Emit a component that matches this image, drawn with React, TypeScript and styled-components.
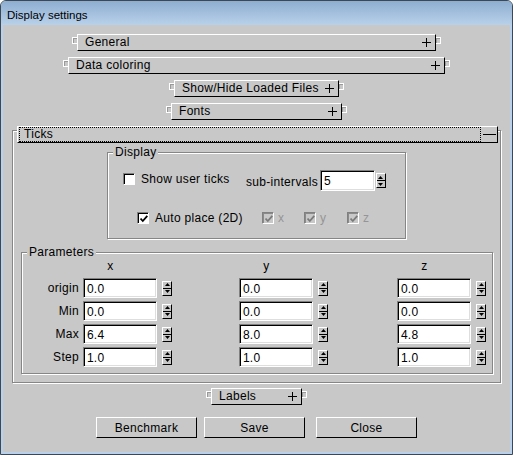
import React, { FC } from 'react';
import styled, { createGlobalStyle } from 'styled-components';

const GlobalStyle = createGlobalStyle`
  html, body {
    margin: 0;
    padding: 0;
    background: #fff;
  }
  body {
    font-family: "Liberation Sans", Arial, sans-serif;
    font-size: 12px;
    color: #000;
  }
`;

const Window = styled.div`
  width: 513px;
  height: 455px;
  box-sizing: border-box;
  border: 1px solid #3e4852;
  border-radius: 6px 6px 0 0;
  background: #b9d1ea;
  display: flex;
  flex-direction: column;
  overflow: hidden;
`;

const TitleBar = styled.div`
  flex: none;
  height: 24px;
  box-sizing: border-box;
  padding: 3px 0 0 6px;
  display: flex;
  align-items: center;
  background: linear-gradient(#8eaed1, #b9d1ea);
  font-size: 11.5px;
`;

const Body = styled.div`
  flex: 1;
  margin: 0 2px 2px;
  background: #c8c8c8;
  display: flex;
  flex-direction: column;
  padding-top: 9px;
  letter-spacing: 0.3px;
`;

/* collapsed section bars */

const BarRow = styled.div<{ $mt: number }>`
  display: flex;
  justify-content: center;
  align-items: flex-start;
  margin-top: ${(p) => p.$mt}px;
`;

const Handle = styled.span<{ $side: 'left' | 'right' }>`
  width: 5px;
  height: 7px;
  margin-top: 3px;
  box-sizing: border-box;
  border: 1px solid #fff;
  ${(p) => (p.$side === 'left' ? 'border-right: 0;' : 'border-left: 0;')}
  box-shadow: inset 1px 1px 0 #9a9a9a;
`;

const Raised = styled.div`
  box-sizing: border-box;
  border: 1px solid;
  border-color: #fff #000 #000 #fff;
  background: #c8c8c8;
`;

const BarButton = styled(Raised)<{ $w: number }>`
  width: ${(p) => p.$w}px;
  height: 17px;
  display: flex;
  align-items: center;
  padding: 0 4px 0 7px;
  line-height: 15px;
`;

const BarLabel = styled.span`
  flex: 1;
  white-space: nowrap;
`;

const Plus: FC = () => (
  <svg width="9" height="9" viewBox="0 0 9 9">
    <path d="M4.5 0V9M0 4.5H9" stroke="#000" strokeWidth="1" />
  </svg>
);

/* ticks panel */

const TicksFrame = styled.div`
  margin: 10px 9px 0 9px;
  border: 1px solid #868686;
  box-shadow: inset 1px 1px 0 #fff, 1px 1px 0 #fff;
  padding-bottom: 8px;
`;

const TicksBar = styled(Raised)`
  margin: -5px 2px 0 4px;
  height: 17px;
  display: flex;
  padding-left: 1px;
`;

const Focus = styled.div`
  flex: 1;
  height: 15px;
  box-sizing: border-box;
  border: 1px dotted #000;
  padding-left: 4px;
  line-height: 13px;
`;

const Minus = styled.div`
  width: 16px;
  display: flex;
  align-items: center;
  justify-content: center;
`;

const Group = styled.div<{ $ml: number; $w: number; $mt: number }>`
  margin: ${(p) => p.$mt}px 0 0 ${(p) => p.$ml}px;
  width: ${(p) => p.$w}px;
  box-sizing: border-box;
  border: 1px solid #868686;
  box-shadow: inset 1px 1px 0 #fff, 1px 1px 0 #fff;
`;

const Legend = styled.div`
  margin: -8px 0 0 5px;
  padding: 0 2px;
  width: fit-content;
  height: 14px;
  line-height: 14px;
  background: #c8c8c8;
`;

const DisplayRow = styled.div<{ $mt: number; $pl: number; $h: number; $pb?: number }>`
  display: flex;
  align-items: center;
  margin-top: ${(p) => p.$mt}px;
  padding-left: ${(p) => p.$pl}px;
  height: ${(p) => p.$h}px;
  margin-bottom: ${(p) => p.$pb ?? 0}px;
`;

const CheckItem = styled.label<{ $w?: number; $lift?: number; $disabled?: boolean }>`
  display: flex;
  align-items: center;
  gap: ${(p) => (p.$disabled ? 4 : 6)}px;
  width: ${(p) => (p.$w ? `${p.$w}px` : 'auto')};
  margin-bottom: ${(p) => p.$lift ?? 0}px;
  color: ${(p) => (p.$disabled ? '#959595' : '#000')};
  white-space: nowrap;
`;

const Box = styled.span<{ $disabled?: boolean }>`
  flex: none;
  width: 12px;
  height: 12px;
  box-sizing: border-box;
  border: 1px solid;
  border-color: #808080 #fff #fff #808080;
  box-shadow: inset 1px 1px 0 ${(p) => (p.$disabled ? '#8a8a8a' : '#000')};
  background: ${(p) => (p.$disabled ? '#c8c8c8' : '#fff')};
  display: flex;
  align-items: center;
  justify-content: center;
  padding: 1px 0 0 1px;
`;

const Check: FC<{ color: string }> = ({ color }) => (
  <svg width="8" height="8" viewBox="0 0 8 8">
    <path d="M0.5 3.5L2.8 6L7.3 0.8" fill="none" stroke={color} strokeWidth="1.8" />
  </svg>
);

const CheckBox: FC<{
  label: string;
  checked?: boolean;
  disabled?: boolean;
  w?: number;
  lift?: number;
}> = ({ label, checked, disabled, w, lift }) => (
  <CheckItem $w={w} $lift={lift} $disabled={disabled}>
    <Box $disabled={disabled}>{checked && <Check color={disabled ? '#7a7a7a' : '#000'} />}</Box>
    {label}
  </CheckItem>
);

const FieldLabel = styled.span<{ $drop?: number }>`
  margin: ${(p) => p.$drop ?? 0}px 2px 0 0;
  white-space: nowrap;
`;

const Field = styled.div<{ $w: number; $h: number }>`
  flex: none;
  width: ${(p) => p.$w}px;
  height: ${(p) => p.$h}px;
  box-sizing: border-box;
  border: 1px solid;
  border-color: #808080 #fff #fff #808080;
  box-shadow: inset 1px 1px 0 #000, inset -1px -1px 0 #dedede;
  background: #fff;
  padding: 1px 0 0 3px;
  display: flex;
  align-items: center;
  letter-spacing: 0.2px;
`;

const Spinner = styled(Raised)<{ $gap: number }>`
  flex: none;
  width: 10px;
  height: 15px;
  margin-left: ${(p) => p.$gap}px;
  display: flex;
  flex-direction: column;
`;

const SpinHalf = styled.div<{ $down?: boolean }>`
  flex: 1;
  display: flex;
  align-items: center;
  justify-content: center;
  border-top: ${(p) => (p.$down ? '1px solid #000' : '0')};
`;

const Spin: FC<{ gap: number }> = ({ gap }) => (
  <Spinner $gap={gap}>
    <SpinHalf>
      <svg width="5" height="3" viewBox="0 0 5 3">
        <path d="M2.5 0L5 3H0Z" fill="#000" />
      </svg>
    </SpinHalf>
    <SpinHalf $down>
      <svg width="5" height="3" viewBox="0 0 5 3">
        <path d="M0 0H5L2.5 3Z" fill="#000" />
      </svg>
    </SpinHalf>
  </Spinner>
);

const ParamGrid = styled.div`
  display: grid;
  grid-template-columns: 61px 156px 158px auto;
  grid-template-rows: 15px repeat(4, 20px);
  row-gap: 3px;
  margin-top: 1px;
  padding-bottom: 6px;
`;

const AxisHead = styled.div`
  width: 55px;
  line-height: 12px;
  text-align: center;
`;

const RowLabel = styled.div`
  text-align: right;
  padding-right: 4px;
  align-self: center;
`;

const Cell = styled.div`
  display: flex;
  align-items: center;
`;

/* footer */

const ActionRow = styled.div`
  display: flex;
  justify-content: center;
  margin-top: 12px;
`;

const ActionButton = styled(Raised)<{ $ml?: number }>`
  width: 101px;
  height: 21px;
  margin-left: ${(p) => p.$ml ?? 0}px;
  display: flex;
  align-items: center;
  justify-content: center;
`;

const sections = [
  { title: 'General', w: 359 },
  { title: 'Data coloring', w: 377 },
  { title: 'Show/Hide Loaded Files', w: 165 },
  { title: 'Fonts', w: 171 },
];

const params = [
  { label: 'origin', values: ['0.0', '0.0', '0.0'] },
  { label: 'Min', values: ['0.0', '0.0', '0.0'] },
  { label: 'Max', values: ['6.4', '8.0', '4.8'] },
  { label: 'Step', values: ['1.0', '1.0', '1.0'] },
];

const SectionBar: FC<{ title: string; w: number; mt: number }> = ({ title, w, mt }) => (
  <BarRow $mt={mt}>
    <Handle $side="left" />
    <BarButton $w={w}>
      <BarLabel>{title}</BarLabel>
      <Plus />
    </BarButton>
    <Handle $side="right" />
  </BarRow>
);

export default function App() {
  return (
    <>
      <GlobalStyle />
      <Window>
        <TitleBar>Display settings</TitleBar>
        <Body>
          {sections.map((s, i) => (
            <SectionBar key={s.title} title={s.title} w={s.w} mt={i === 0 ? 0 : 6} />
          ))}

          <TicksFrame>
            <TicksBar>
              <Focus>Ticks</Focus>
              <Minus>
                <svg width="13" height="1" viewBox="0 0 13 1">
                  <path d="M0 0.5H13" stroke="#000" strokeWidth="1" />
                </svg>
              </Minus>
            </TicksBar>

            <Group $ml={94} $w={299} $mt={9}>
              <Legend>Display</Legend>
              <DisplayRow $mt={11} $pl={15} $h={21}>
                <CheckBox label="Show user ticks" w={123} lift={4} />
                <FieldLabel $drop={3}>sub-intervals</FieldLabel>
                <Field $w={55} $h={21}>5</Field>
                <Spin gap={1} />
              </DisplayRow>
              <DisplayRow $mt={19} $pl={29} $h={16} $pb={12}>
                <CheckBox label="Auto place (2D)" checked w={125} />
                <CheckBox label="x" checked disabled w={42} />
                <CheckBox label="y" checked disabled w={43} />
                <CheckBox label="z" checked disabled />
              </DisplayRow>
            </Group>

            <Group $ml={8} $w={472} $mt={13}>
              <Legend>Parameters</Legend>
              <ParamGrid>
                <div />
                <AxisHead>x</AxisHead>
                <AxisHead>y</AxisHead>
                <AxisHead>z</AxisHead>
                {params.map((row) => (
                  <React.Fragment key={row.label}>
                    <RowLabel>{row.label}</RowLabel>
                    {row.values.map((v, i) => (
                      <Cell key={i}>
                        <Field $w={74} $h={20}>{v}</Field>
                        <Spin gap={5} />
                      </Cell>
                    ))}
                  </React.Fragment>
                ))}
              </ParamGrid>
            </Group>
          </TicksFrame>

          <SectionBar title="Labels" w={91} mt={5} />

          <ActionRow>
            <ActionButton>Benchmark</ActionButton>
            <ActionButton $ml={7}>Save</ActionButton>
            <ActionButton $ml={11}>Close</ActionButton>
          </ActionRow>
        </Body>
      </Window>
    </>
  );
}
